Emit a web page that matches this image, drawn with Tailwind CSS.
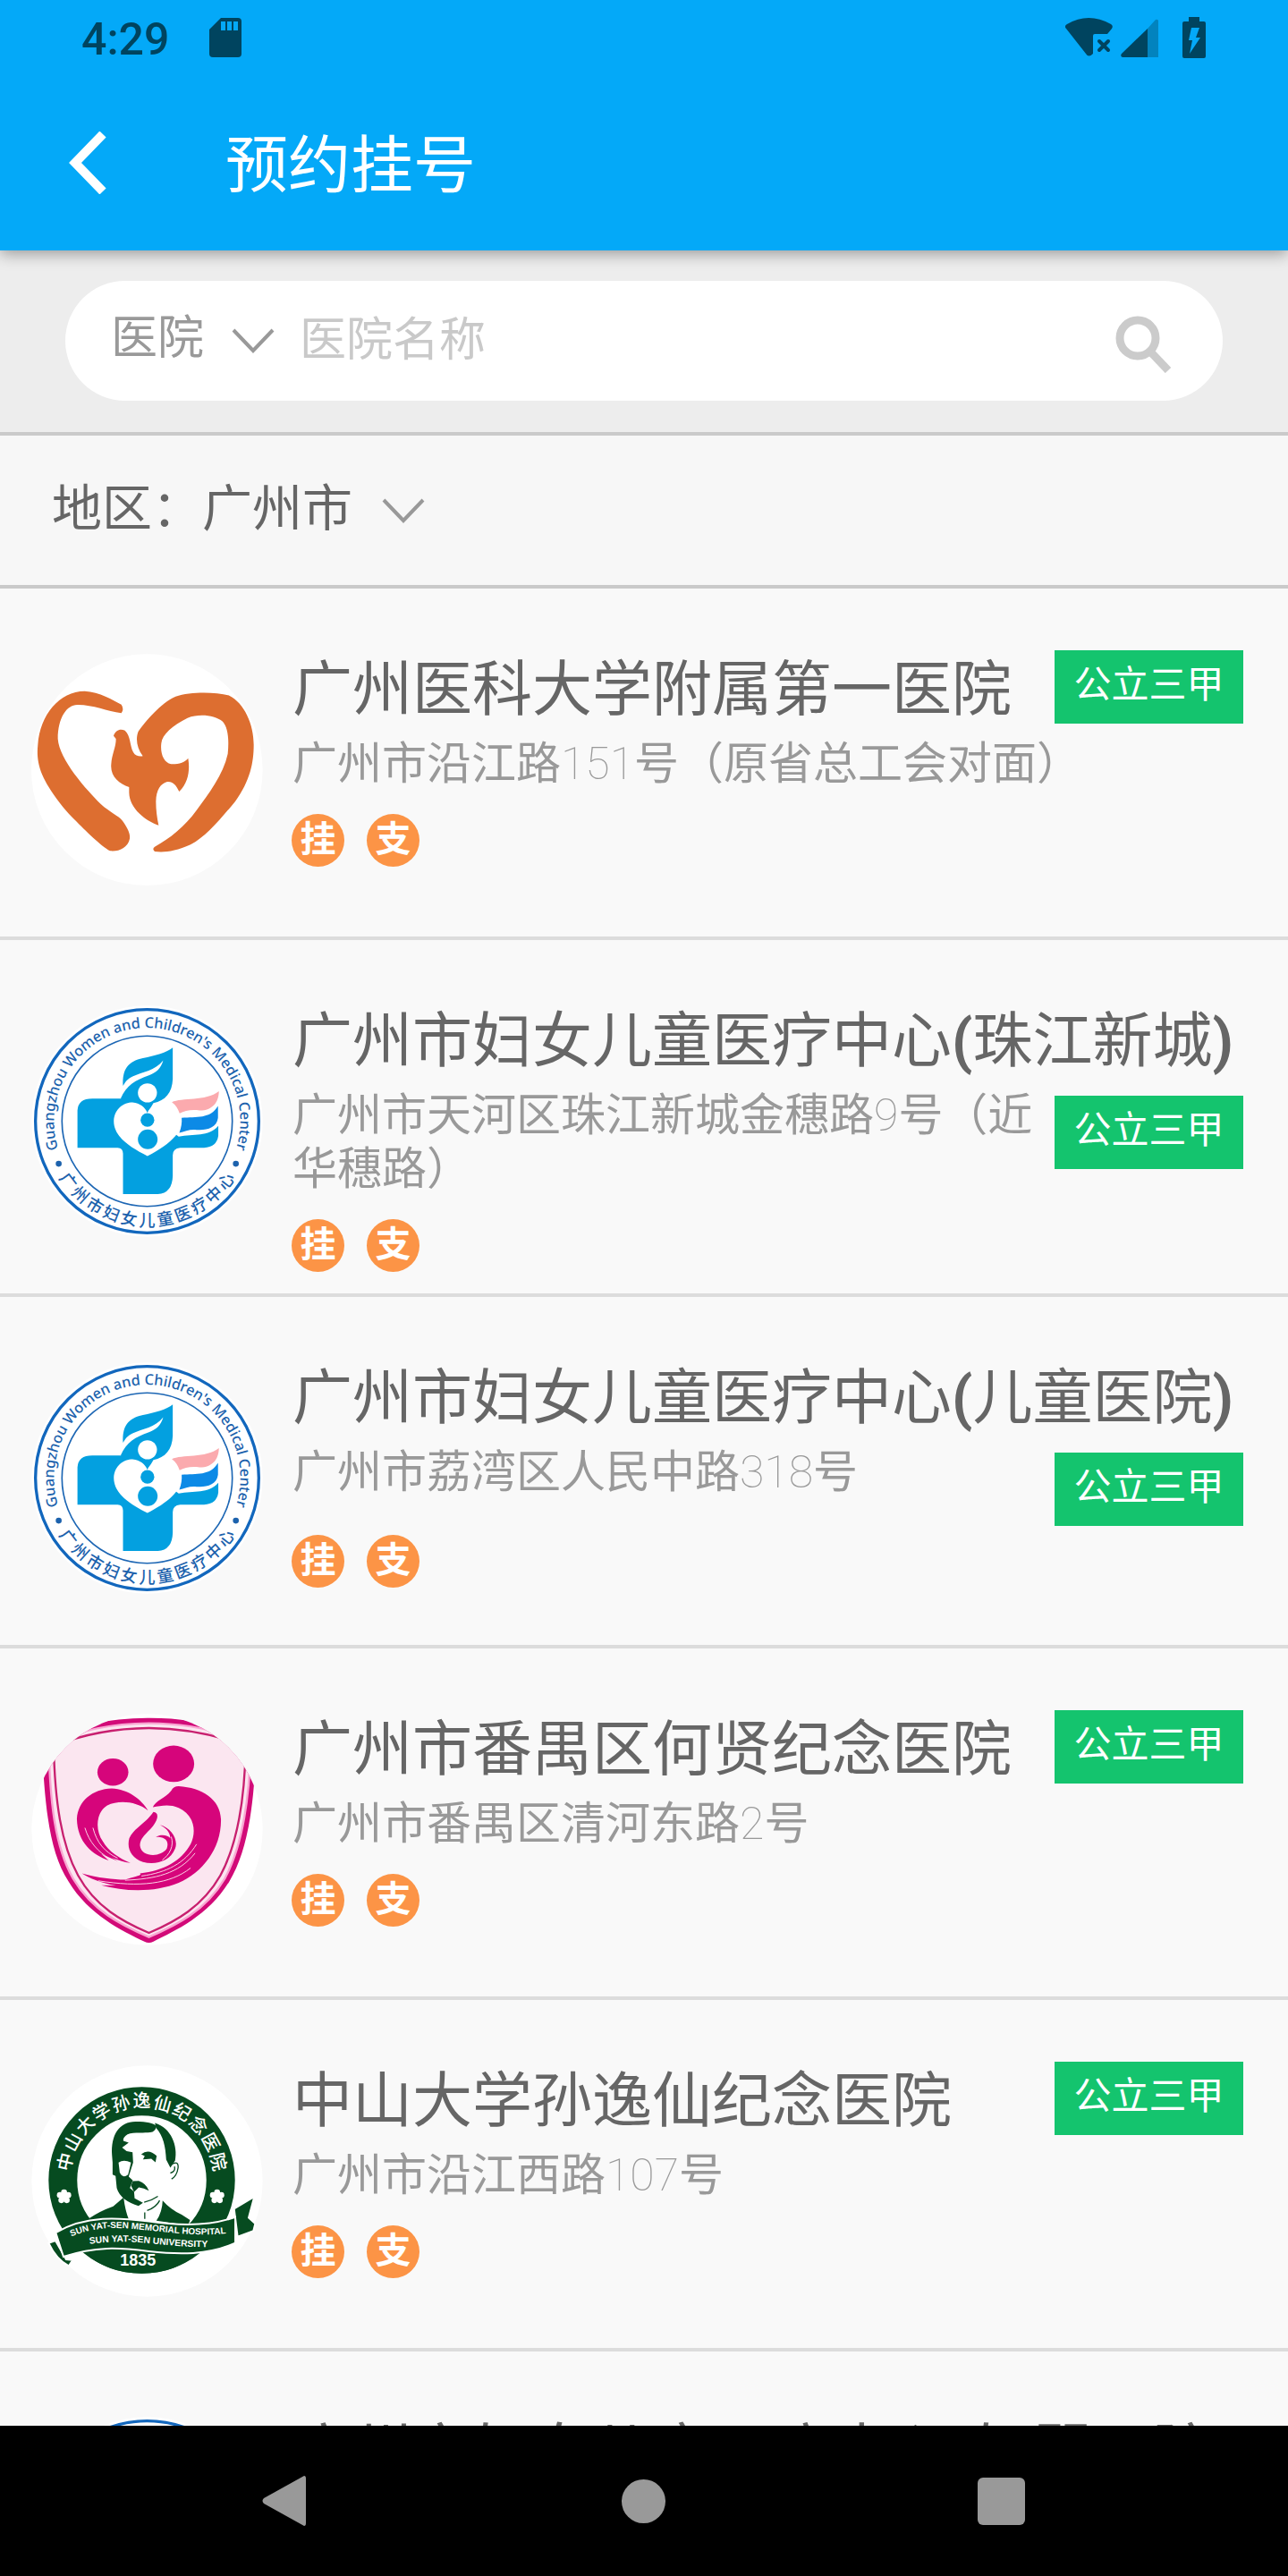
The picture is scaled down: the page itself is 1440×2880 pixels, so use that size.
<!DOCTYPE html>
<html lang="zh-CN">
<head>
  <meta charset="UTF-8" />
  <meta name="viewport" content="width=device-width, initial-scale=1.0"/>
  <title>预约挂号</title>
  <script src="https://cdn.jsdelivr.net/npm/@tailwindcss/browser@4"></script>
</head>
<body class="h-screen flex flex-col overflow-hidden bg-[#f9f9f9] font-['Roboto','Noto_Sans_CJK_SC',sans-serif]">

  <!-- Shared logos -->
  <svg class="absolute size-0" aria-hidden="true">
    <symbol id="logo-heart" viewBox="106 95 777 777">
      <circle cx="494" cy="484" r="388" fill="#fff"/>
      <g fill="#dd6e30">
        <path d="M128 400C135 300 200 220 285 220C335 222 380 250 408 265Q418 280 408 294C360 287 310 265 260 266C225 266 195 310 195 380C200 450 290 550 340 600C370 627 398 638 412 655C430 680 439 700 436 715C430 745 400 759 370 756C340 740 290 690 250 650C200 600 150 530 135 480C127 450 125 430 128 400Z"/>
        <path d="M480 438C460 410 455 380 465 355C490 320 540 260 590 238C640 222 720 222 770 235C820 260 852 330 852 400C852 460 840 520 790 590C740 650 690 710 640 735C590 758 550 762 520 758Q510 750 520 742C570 715 620 675 660 620C700 565 750 500 765 430C770 380 765 340 748 322C720 300 670 295 630 310C580 335 545 365 542 395C538 430 550 460 575 465C600 466 622 458 632 445C638 480 635 525 602 557C592 535 580 522 562 524C540 530 525 550 524 590C524 620 528 645 533 670C490 655 435 615 434 560L434 542C400 530 370 505 374 465C376 430 390 410 390 380L382 370C388 350 405 345 420 352C440 370 435 400 448 425C455 438 468 440 480 438Z"/>
      </g>
    </symbol>

    <symbol id="logo-women" viewBox="105 77 778 778">
      <circle cx="494" cy="466" r="388" fill="#fff"/>
      <circle cx="494" cy="466" r="375" fill="none" stroke="#1267bd" stroke-width="10"/>
      <circle cx="494" cy="466" r="286" fill="none" stroke="#1c66b4" stroke-width="5"/>
      <path id="arc-top" d="M234 640A313 313 0 1 1 754 640" fill="none"/>
      <path id="arc-bottom" d="M141 466A353 353 0 0 0 847 466" fill="none"/>
      <g fill="#1c62ad" text-anchor="middle">
        <text font-size="49" font-weight="500" font-family="Noto Sans"><textPath href="#arc-top" startOffset="50%">Guangzhou Women and Children's Medical Center</textPath></text>
        <text font-size="55" font-weight="500" font-family="Noto Sans CJK SC" dx="0 10 10 10 10 10 10 10 10 10 10"><textPath href="#arc-bottom" startOffset="50%">广州市妇女儿童医疗中心</textPath></text>
        <circle cx="197" cy="609" r="10"/>
        <circle cx="792" cy="609" r="10"/>
      </g>
      <g fill="#03a0e0">
        <path d="M260 555V430Q262 390 310 390H405L495 438L600 518C650 508 700 520 733 482V515Q728 553 685 555H605Q580 557 580 580V650Q578 708 530 711H413V575Q413 556 395 555Z"/>
        <path d="M405 390C425 345 455 328 500 312C525 303 540 290 548 262C520 298 480 300 445 316Q425 325 413 347C410 290 430 265 480 254C520 247 560 235 580 219V325C578 370 555 398 515 405L495 440L430 420Z"/>
      </g>
      <path d="M495 583C440 555 382 520 382 465C384 425 415 403 445 403C470 405 488 420 495 438C500 420 525 405 550 403C590 405 610 430 610 468C608 510 560 550 495 583Z" fill="#fff"/>
      <path d="M610 455C660 450 705 460 732 415V455C728 490 690 498 660 495C640 492 620 500 602 505Q612 480 610 455Z" fill="#0c8ae6"/>
      <path d="M577 402C610 385 690 400 735 365C735 400 715 430 670 430C640 426 620 432 603 440Q595 415 577 402Z" fill="#fbaaae"/>
      <circle cx="495" cy="371" r="32" fill="#fff"/>
      <circle cx="495" cy="462" r="23" fill="#03a0e0"/>
      <circle cx="496" cy="527" r="33" fill="#03a0e0"/>
    </symbol>

    <symbol id="logo-shield" viewBox="105 107 778 778">
      <clipPath id="round"><circle cx="494" cy="496" r="388"/></clipPath>
      <circle cx="494" cy="496" r="388" fill="#fff"/>
      <g clip-path="url(#round)">
        <path d="M140 200Q300 120 500 121Q700 120 860 200C855 420 830 570 770 670C700 785 590 835 515 872Q500 880 485 872C410 835 300 785 230 670C165 570 150 420 140 200Z" fill="#d20a78"/>
        <path d="M163 208Q315 140 500 139Q685 140 842 208C838 410 812 555 755 660C690 770 590 818 500 857C410 818 310 770 245 660C185 555 168 410 163 208Z" fill="#fbe6f0" stroke="#f9a6d2" stroke-width="7"/>
        <path d="M180 215Q330 156 500 155Q670 156 825 215C822 400 797 545 740 650C680 755 590 805 500 843C410 805 320 755 262 650C205 545 184 400 180 215Z" fill="#fbe6f0" stroke="#c8206f" stroke-width="7"/>
        <g fill="#d6057b">
          <ellipse cx="379" cy="303" rx="52" ry="46"/>
          <ellipse cx="583" cy="275" rx="69" ry="61"/>
          <path d="M497 432C460 402 400 395 360 415C320 440 320 500 345 535C365 570 400 592 438 608C395 602 365 585 345 570L395 602L340 578L365 600C310 580 260 540 258 460C262 400 310 360 375 358C430 360 475 395 497 432Z"/>
          <path d="M513 421C520 400 555 390 575 365Q582 350 600 350C680 355 742 395 742 465C742 560 680 640 600 675C520 708 420 705 340 683L390 684C340 675 300 660 275 643C330 658 380 664 420 664C450 655 480 650 470 643C550 635 610 600 640 545C662 500 650 445 600 423C570 410 540 416 513 421Z"/>
          <path d="M515 437Q535 440 525 465C510 500 470 515 470 550C475 590 540 590 560 560C570 530 550 520 523 521C540 510 565 515 572 525C570 500 555 490 537 480C575 490 600 530 588 560C570 605 520 615 480 605C440 590 425 560 434 525C450 490 490 475 515 437Z"/>
        </g>
        <g fill="none" stroke="#fbd3e6" stroke-width="3">
          <path d="M285 490C300 540 330 570 365 592"/>
          <path d="M312 490C325 540 350 570 395 592"/>
          <path d="M655 575C600 645 520 662 420 666"/>
          <path d="M640 625C570 680 470 690 330 668"/>
          <path d="M660 545C620 610 560 640 475 652"/>
          <path d="M575 520C585 550 570 580 545 598"/>
        </g>
      </g>
    </symbol>

    <symbol id="logo-sun" viewBox="105 58 778 778">
      <circle cx="494" cy="447" r="388" fill="#fff"/>
      <circle cx="476" cy="444" r="265" fill="none" stroke="#064b20" stroke-width="96"/>
      <path id="arc-sun" d="M255 540A242 242 0 1 1 697 540" fill="none"/>
      <text font-size="60" font-weight="500" font-family="Noto Sans CJK SC" fill="#fff" text-anchor="middle" dx="0 5 5 5 5 5 5 5 5 5 5"><textPath href="#arc-sun" startOffset="50%">中山大学孙逸仙纪念医院</textPath></text>
      <g id="flower" fill="#fff">
        <circle cx="215" cy="498" r="13"/>
        <circle cx="215" cy="485" r="10"/>
        <circle cx="229" cy="494" r="10"/>
        <circle cx="224" cy="511" r="10"/>
        <circle cx="206" cy="511" r="10"/>
        <circle cx="201" cy="494" r="10"/>
      </g>
      <use href="#flower" x="514"/>
      <!-- portrait -->
      <g fill="#064b20">
        <path d="M376 360C372 290 400 248 455 247C495 247 515 252 525 262Q524 275 512 282C485 288 450 280 428 290Q412 300 414 312L432 318L410 334L425 346L445 350L447 385L432 432L446 445L436 470L450 482L452 505L480 520L465 530C430 520 400 500 392 470L388 430L378 425L378 385Z"/>
        <path d="M520 252C575 268 598 330 588 378L572 402L558 375C556 330 548 295 524 268Z"/>
        <path d="M474 357Q498 336 526 362L522 384L508 372L480 374L486 363Z"/>
        <path d="M446 447L466 446Q490 454 500 479Q482 470 466 468L450 484L440 462Z"/>
        <path d="M300 572Q335 548 380 532L415 502Q420 545 432 575L370 590L310 592Z"/>
        <path d="M546 512Q570 540 610 560L638 578L632 596L525 580Q545 550 546 512Z"/>
      </g>
      <path d="M398 385Q415 372 440 385L430 425Q412 440 402 418Z" fill="#fff"/>
      <g fill="none" stroke="#064b20" stroke-width="4">
        <path d="M574 392Q600 376 598 402Q594 430 576 440"/>
        <path d="M572 420Q590 415 586 398"/>
        <path d="M484 518Q510 512 530 498"/>
        <path d="M494 546Q525 535 536 512"/>
        <path d="M486 552V574"/>
      </g>
      <!-- ribbon -->
      <path d="M280 685Q476 640 670 685Q590 757 476 757Q360 757 280 685Z" fill="#064b20"/>
      <g fill="#064b20" stroke="#fff" stroke-width="6">
        <path d="M786 540L854 499L835 570L857 590L851 614L798 634Z"/>
        <path d="M163 655L186 647L222 710L244 712L231 732Q190 712 163 655Z"/>
        <path d="M187 620C290 560 400 570 500 582C600 597 700 600 790 568V655C700 696 600 694 500 683C400 670 320 665 213 701Z"/>
      </g>
      <path id="rib1" d="M225 640C330 590 420 605 500 613C600 623 680 633 775 621" fill="none"/>
      <path id="rib2" d="M230 673C330 647 420 647 500 656C600 665 680 675 770 662" fill="none"/>
      <g fill="#fff" font-family="Liberation Sans" font-weight="700" text-anchor="middle">
        <text font-size="30"><textPath href="#rib1" startOffset="50%">SUN YAT-SEN MEMORIAL HOSPITAL</textPath></text>
        <text font-size="31"><textPath href="#rib2" startOffset="50%">SUN YAT-SEN UNIVERSITY</textPath></text>
        <text x="463" y="731" font-size="54">1835</text>
      </g>
    </symbol>

    <symbol id="chevron" viewBox="0 0 48 28">
      <path d="M2 2L24 25L46 2" fill="none" stroke="#999" stroke-width="4"/>
    </symbol>
  </svg>

  <header class="relative z-10 shrink-0 bg-[#04a9f8] shadow-[0_4px_16px_rgba(0,0,0,0.35)]">
    <!-- Status bar -->
    <div class="flex h-[84px] items-center pl-[91px] pr-[92px] text-[#00445f]">
      <span class="w-[95px] pt-1 text-[50px] font-medium leading-none">4:29</span>
      <svg class="ml-12 h-11 w-9" viewBox="0 0 36 44">
        <path d="M13 0H32Q36 0 36 4V40Q36 44 32 44H4Q0 44 0 40V13Z" fill="currentColor"/>
        <path d="M13 4H18V14H13ZM20 4H25V14H20ZM27 4H32V14H27Z" fill="#04a9f8"/>
      </svg>
      <svg class="ml-auto h-[46px] w-[53px]" viewBox="0 0 53 46">
        <path d="M1 13C-1 11 0 9 2 8Q26-6 51 8Q54 10 52 13L47 19H33Q31 19 31 21V41Q26 46 23 41Z" fill="currentColor"/>
        <path d="M38 27L48 37M48 27L38 37" stroke="currentColor" stroke-width="4" stroke-linecap="round"/>
      </svg>
      <svg class="ml-[9px] h-[44px] w-[42px]" viewBox="0 0 42 44">
        <path d="M30 12V44H42V3Q41 1 39 2Z" fill="#0283be"/>
        <path d="M30 12V44H2Q-1 43 1 40Z" fill="currentColor"/>
      </svg>
      <svg class="ml-[27px] h-[46px] w-[26px]" viewBox="0 0 26 46">
        <path d="M7 0H19V5H24Q26 5 26 7V44Q26 46 24 46H2Q0 46 0 44V7Q0 5 2 5H7Z" fill="currentColor"/>
        <path d="M10 12H19L15 23H20L8 41L11 26H7Z" fill="#04a9f8"/>
      </svg>
    </div>
    <!-- Title bar -->
    <div class="flex h-[196px] items-center pl-[77px]">
      <button type="button" aria-label="返回">
        <svg class="h-[70px] w-[42px]" viewBox="0 0 42 70">
          <path d="M38 3L7 35L38 67" fill="none" stroke="#fff" stroke-width="10"/>
        </svg>
      </button>
      <h1 class="ml-[133px] pt-2 text-[70px] leading-[84px] text-white">预约挂号</h1>
    </div>
  </header>

  <!-- Search -->
  <form class="shrink-0 border-b-4 border-[#cacaca] bg-[#ededed] px-[73px] pt-[34px] pb-[35px]" onsubmit="return false">
    <div class="flex h-[134px] items-center rounded-full bg-white pl-[51px] pr-[58px]">
      <label class="flex items-center">
        <select aria-label="搜索类型" class="appearance-none bg-transparent pb-1 text-[52px] leading-[64px] text-[#999] outline-none">
          <option>医院</option>
        </select>
        <svg class="ml-[30px] h-7 w-12"><use href="#chevron"/></svg>
      </label>
      <input type="text" aria-label="医院名称" placeholder="医院名称" class="ml-[28px] min-w-0 flex-1 bg-transparent text-[52px] leading-[64px] text-[#666] outline-none placeholder:text-[#c9c9c9]"/>
      <button type="submit" aria-label="搜索" class="pt-2">
        <svg class="h-16 w-[62px]" viewBox="0 0 62 64">
          <circle cx="25" cy="25" r="20" fill="none" stroke="#cbcbcb" stroke-width="9"/>
          <path d="M39 40L59 61" stroke="#cbcbcb" stroke-width="9"/>
        </svg>
      </button>
    </div>
  </form>

  <!-- Region -->
  <div class="flex h-[171px] shrink-0 items-center border-b-4 border-[#cacaca] bg-[#f7f7f7] pb-1 pl-[58px] text-[56px] leading-[72px] text-[#666]">
    <label for="region">地区：</label>
    <select id="region" class="appearance-none bg-transparent outline-none">
      <option>广州市</option>
    </select>
    <svg class="mt-1 ml-[33px] h-7 w-12"><use href="#chevron"/></svg>
  </div>

  <!-- Hospital list -->
  <ul id="hospitalList" class="min-h-0 flex-1 overflow-hidden"></ul>

  <!-- Navigation bar -->
  <nav class="grid h-[168px] shrink-0 grid-cols-3 items-center justify-items-center bg-black pr-[121px] pl-[119px]">
    <button type="button" aria-label="后退">
      <svg class="h-14 w-[52px]" viewBox="0 0 52 56"><path d="M47 0Q49 0 49 3V53Q49 56 47 56L2 31Q-1 28 2 25Z" fill="#999"/></svg>
    </button>
    <button type="button" aria-label="主页" class="h-[49px] w-[49px] rounded-full bg-[#999]"></button>
    <button type="button" aria-label="最近任务" class="h-[53px] w-[53px] rounded-md bg-[#999]"></button>
  </nav>

  <script>
    const hospitals = [
      { logo: 'logo-heart', name: '广州医科大学附属第一医院', address: '广州市沿江路151号（原省总工会对面）' },
      { logo: 'logo-women', name: '广州市妇女儿童医疗中心(珠江新城)', address: '广州市天河区珠江新城金穗路9号（近华穗路）' },
      { logo: 'logo-women', name: '广州市妇女儿童医疗中心(儿童医院)', address: '广州市荔湾区人民中路318号' },
      { logo: 'logo-shield', name: '广州市番禺区何贤纪念医院', address: '广州市番禺区清河东路2号' },
      { logo: 'logo-sun', name: '中山大学孙逸仙纪念医院', address: '广州市沿江西路107号' },
      { logo: 'logo-women', name: '广州市妇女儿童医疗中心(妇婴医院)', address: '' }
    ];

    const list = document.getElementById('hospitalList');

    hospitals.forEach(h => {
      // long names push the level badge below the title
      const long = h.name.length > 12;
      const badge = `<span class="float-right ${long ? 'mt-2' : ''} mb-[10px] h-[82px] w-[211px] bg-[#14c46e] pb-1 text-center text-[42px] leading-[78px] text-white">公立三甲</span>`;
      const name = h.name.replace(/[()]/g, '<span class="font-bold">$&</span>');
      const address = h.address.replace(/\d+/, '<span class="font-thin">$&</span>');
      // the last row only peeks out above the navigation bar
      const details = h.address ? `${long ? badge : ''}
          <p class="text-[50px] leading-[60px] text-[#999]">${address}</p>
          <div class="clear-both mt-[26px] -ml-px flex gap-[25px] text-[40px] font-bold leading-[58px] text-white">
            <span class="h-[59px] w-[59px] rounded-full bg-[#fc9446] text-center">挂</span>
            <span class="h-[59px] w-[59px] rounded-full bg-[#fc9446] text-center">支</span>
          </div>` : '';
      list.innerHTML += `<li class="flex min-h-[393px] border-b-4 border-[#dcdcdc] pt-[69px] pr-[50px] pb-6 pl-[35px]">
        <svg class="mt-1 h-[259px] w-[259px] shrink-0"><use href="#${h.logo}"/></svg>
        <div class="ml-[33px] min-w-0 flex-1">
          ${long ? '' : badge}
          <h2 class="whitespace-nowrap pt-[5px] pb-[14px] text-[67px] leading-[78px] text-[#666]">${name}</h2>
          ${details}
        </div>
      </li>`;
    });
  </script>
</body>
</html>
